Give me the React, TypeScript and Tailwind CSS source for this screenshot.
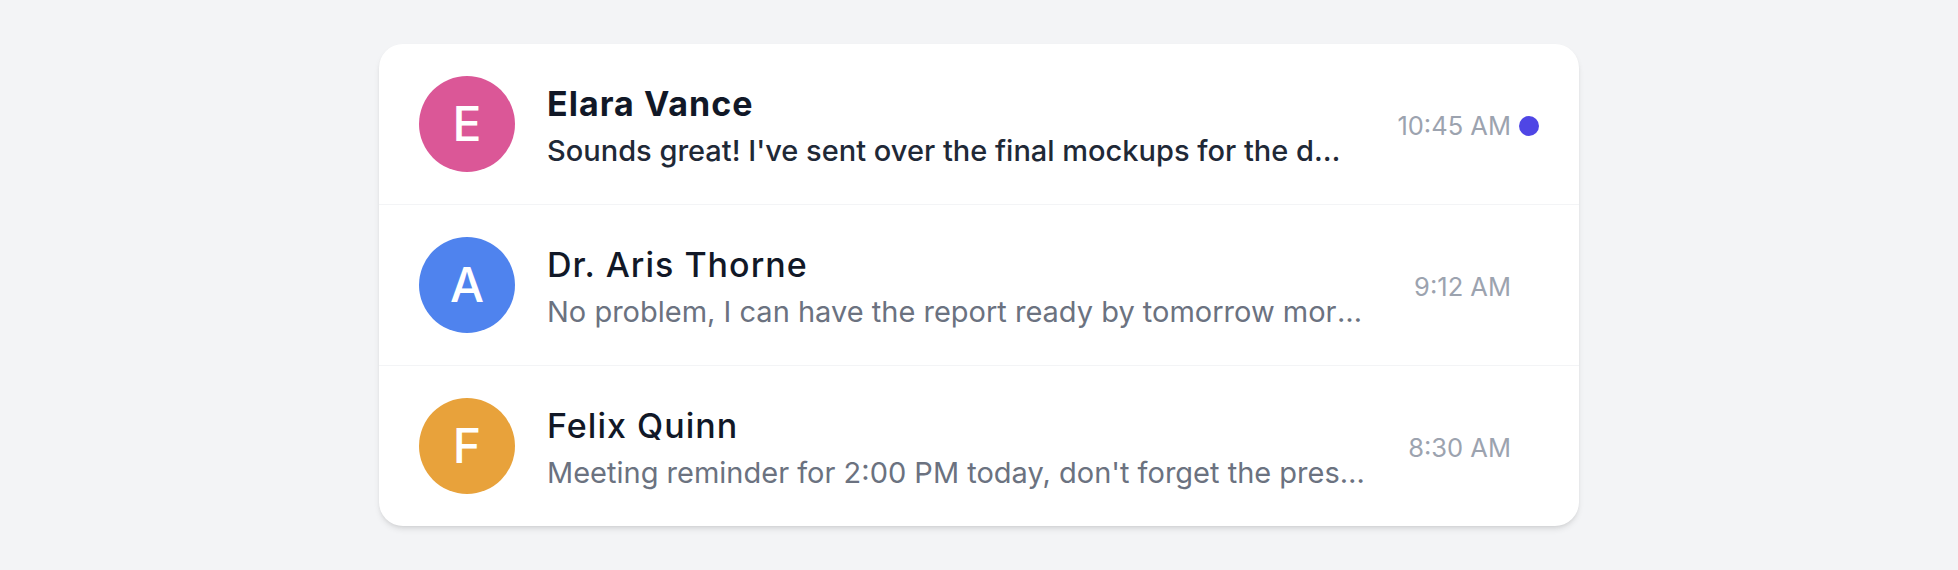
import React from "react";

type Msg = {
  initial: string;
  color: string;
  name: string;
  text: string;
  time: string;
  unread: boolean;
};

const messages: Msg[] = [
  {
    initial: "E",
    color: "bg-[#db5797]",
    name: "Elara Vance",
    text: "Sounds great! I've sent over the final mockups for the design review, let me know what you think.",
    time: "10:45 AM",
    unread: true,
  },
  {
    initial: "A",
    color: "bg-[#4f83ee]",
    name: "Dr. Aris Thorne",
    text: "No problem, I can have the report ready by tomorrow morning before the meeting.",
    time: "9:12 AM",
    unread: false,
  },
  {
    initial: "F",
    color: "bg-[#e8a23b]",
    name: "Felix Quinn",
    text: "Meeting reminder for 2:00 PM today, don't forget the presentation slides.",
    time: "8:30 AM",
    unread: false,
  },
];

export default function App() {
  return (
    <div className="min-h-screen bg-[#f3f4f6] flex items-center justify-center font-['Inter',sans-serif]">
      <div className="w-[1200px] bg-white rounded-3xl shadow-md overflow-hidden divide-y divide-[#f3f4f6]">
        {messages.map((m) => (
          <div key={m.name} className="flex items-center gap-8 px-10 py-8">
            <div
              className={`w-24 h-24 shrink-0 rounded-full ${m.color} flex items-center justify-center text-white text-[48px] font-medium leading-none`}
            >
              {m.initial}
            </div>
            <div className="flex-1 min-w-0 pb-[2px] mr-[10px]">
              <div
                className={`text-[34px] leading-[56px] tracking-[0.03em] text-[#111827] truncate ${
                  m.unread ? "font-bold" : "font-medium"
                }`}
              >
                {m.name}
              </div>
              <div
                className={`text-[29px] leading-[38px] truncate ${
                  m.unread ? "text-[#1f2937] font-medium" : "text-[#6b7280]"
                }`}
              >
                {m.text}
              </div>
            </div>
            <div className="flex items-center gap-2 shrink-0 pt-[4px]">
              <span className="text-[25.5px] leading-8 text-[#9ca3af]">{m.time}</span>
              <span
                className={`w-5 h-5 rounded-full ${m.unread ? "bg-[#4f46e5]" : "bg-transparent"}`}
              />
            </div>
          </div>
        ))}
      </div>
    </div>
  );
}
